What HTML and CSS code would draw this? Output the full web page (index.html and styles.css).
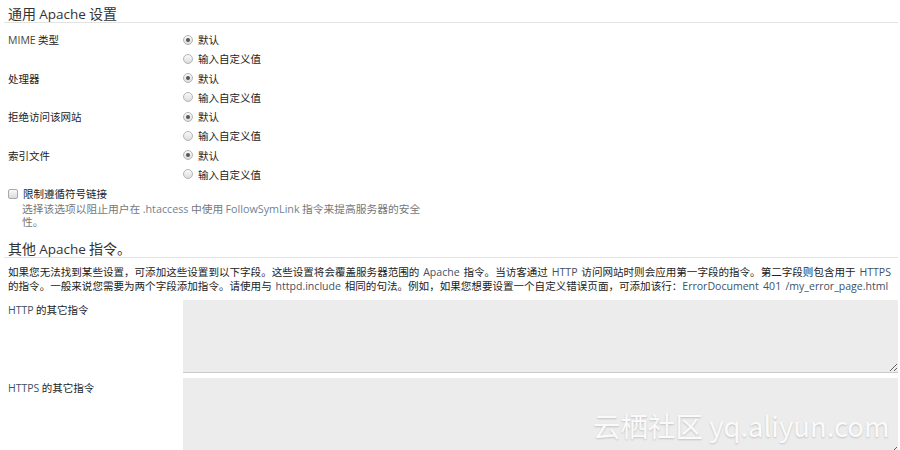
FILE: index.html
```html
<!DOCTYPE html>
<html lang="zh-CN">
<head>
<meta charset="utf-8">
<title>Apache 设置</title>
<link rel="stylesheet" href="styles.css">
</head>
<body>
<div class="page">
  <h2 class="section-title">通用 <span class="en">Apache</span> 设置</h2>

  <div class="group">
    <div class="group-label"><span class="en">MIME</span> 类型</div>
    <div class="options">
      <label class="opt"><input type="radio" name="mime" checked><span>默认</span></label>
      <label class="opt"><input type="radio" name="mime"><span>输入自定义值</span></label>
    </div>
  </div>
  <div class="group">
    <div class="group-label">处理器</div>
    <div class="options">
      <label class="opt"><input type="radio" name="handler" checked><span>默认</span></label>
      <label class="opt"><input type="radio" name="handler"><span>输入自定义值</span></label>
    </div>
  </div>
  <div class="group">
    <div class="group-label">拒绝访问该网站</div>
    <div class="options">
      <label class="opt"><input type="radio" name="deny" checked><span>默认</span></label>
      <label class="opt"><input type="radio" name="deny"><span>输入自定义值</span></label>
    </div>
  </div>
  <div class="group">
    <div class="group-label">索引文件</div>
    <div class="options">
      <label class="opt"><input type="radio" name="index" checked><span>默认</span></label>
      <label class="opt"><input type="radio" name="index"><span>输入自定义值</span></label>
    </div>
  </div>

  <label class="check"><input type="checkbox"><span>限制遵循符号链接</span></label>
  <p class="help">选择该选项以阻止用户在 <span class="en">.htaccess</span> 中使用 <span class="en">FollowSymLink</span> 指令来提高服务器的安全性。</p>

  <h2 class="section-title second">其他 <span class="en">Apache</span> 指令。</h2>
  <p class="desc">如果您无法找到某些设置，可添加这些设置到以下字段。这些设置将会覆盖服务器范围的 <span class="en">Apache</span> 指令。当访客通过 <span class="en">HTTP</span> 访问网站时则会应用第一字段的指令。第二字段则包含用于 <span class="en">HTTPS</span> 的指令。一般来说您需要为两个字段添加指令。请使用与 <span class="en">httpd.include</span> 相同的句法。例如，如果您想要设置一个自定义错误页面，可添加该行：<span class="en">ErrorDocument 401 /my_error_page.html</span></p>

  <div class="field">
    <div class="field-label"><span class="en">HTTP</span> 的其它指令</div>
    <textarea class="area"></textarea>
  </div>
  <div class="field">
    <div class="field-label"><span class="en">HTTPS</span> 的其它指令</div>
    <textarea class="area"></textarea>
  </div>
</div>
<div class="watermark">云栖社区 yq.aliyun.com</div>
</body>
</html>
```

FILE: styles.css
```css
* { box-sizing: border-box; }
html, body { margin: 0; padding: 0; }
body {
  width: 900px;
  height: 450px;
  overflow: hidden;
  background: #fff;
  font-family: "Noto Sans CJK SC", "Open Sans", sans-serif;
  font-size: 10.5px;
  color: #222;
  position: relative;
}
.en { font-family: "Open Sans", "Noto Sans CJK SC", sans-serif; color: #3d5266; line-height: 10px; }
.page { padding: 5px 2px 0 4px; }
.section-title {
  margin: 0;
  padding-left: 4px;
  font-size: 14px;
  font-weight: normal;
  line-height: 17px;
  color: #333;
  border-bottom: 1px solid #e2e2e2;
}
.section-title .en { color: #333; font-size: 13.5px; }
.section-title:first-child { margin-bottom: 7px; }
.section-title.second { margin-top: 12px; }

.group { display: flex; padding-left: 4px; margin-bottom: 0.5px; }
.group-label { width: 175px; line-height: 19px; }
.group-label .en { color: #4a4232; }
.options { display: flex; flex-direction: column; }
.opt { display: flex; align-items: center; height: 19px; gap: 5px; }

input[type="radio"] {
  appearance: none;
  -webkit-appearance: none;
  margin: 0;
  width: 10px;
  height: 10px;
  border-radius: 50%;
  border: 1px solid #b4b4b4;
  background: linear-gradient(#fafafa, #dcdcdc);
  position: relative;
}
input[type="radio"]:checked::after {
  content: "";
  position: absolute;
  left: 2px; top: 2px;
  width: 4px; height: 4px;
  border-radius: 50%;
  background: #555;
}
.check { display: flex; align-items: center; gap: 5px; height: 19px; padding-left: 4px; }
input[type="checkbox"] {
  appearance: none;
  -webkit-appearance: none;
  margin: 0;
  width: 10px;
  height: 10px;
  border-radius: 2px;
  border: 1px solid #a8a8a8;
  background: linear-gradient(#fafafa, #dadada);
}
.help {
  margin: 0;
  padding-left: 18px;
  width: 424px;
  font-size: 10.75px;
  line-height: 12.5px;
  color: #777;
}
.help .en { color: #6f8394; }
.desc {
  margin: 7px 0 0;
  padding-left: 4px;
  font-size: 10.55px;
  word-spacing: 1.5px;
  line-height: 14px;
  color: #222;
}
.field { display: flex; padding-left: 4px; margin-top: 7px; }
.field-label { width: 175px; line-height: 19px; }
.field-label .en { color: #3d5266; }
.area {
  flex: 1;
  height: 73px;
  margin: 0;
  border: none;
  border-bottom: 1px solid #c8ccc8;
  background: #ececec;
  resize: vertical;
  font: inherit;
}
.field + .field { margin-top: 5px; }
.field + .field .area { height: 78px; }
.watermark {
  position: absolute;
  left: 593px;
  top: 406px;
  font-family: "Noto Sans CJK SC", sans-serif;
  font-size: 27.5px;
  line-height: 38px;
  color: #fafafa;
  text-shadow: 0 1px 2px rgba(0,0,0,0.18);
  white-space: nowrap;
  pointer-events: none;
}
```
